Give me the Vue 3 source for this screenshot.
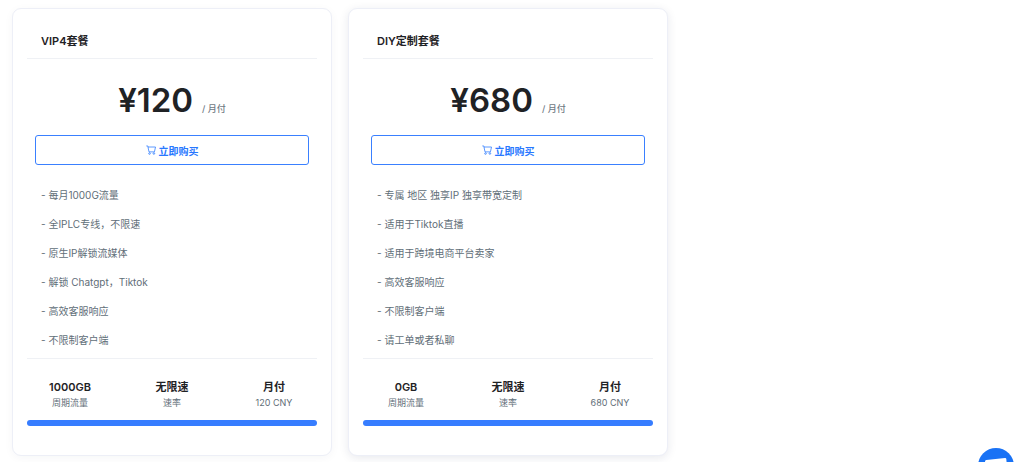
<script setup>
const plans = [
  {
    name: 'VIP4套餐',
    price: '¥120',
    features: ['每月1000G流量', '全IPLC专线，不限速', '原生IP解锁流媒体', '解锁 Chatgpt，Tiktok', '高效客服响应', '不限制客户端'],
    stats: [
      { value: '1000GB', label: '周期流量' },
      { value: '无限速', label: '速率' },
      { value: '月付', label: '120 CNY' },
    ],
    raised: false,
  },
  {
    name: 'DIY定制套餐',
    price: '¥680',
    features: ['专属 地区 独享IP 独享带宽定制', '适用于Tiktok直播', '适用于跨境电商平台卖家', '高效客服响应', '不限制客户端', '请工单或者私聊'],
    stats: [
      { value: '0GB', label: '周期流量' },
      { value: '无限速', label: '速率' },
      { value: '月付', label: '680 CNY' },
    ],
    raised: true,
  },
]
</script>

<template>
  <main class="plans">
    <article v-for="plan in plans" :key="plan.name" class="card" :class="{ raised: plan.raised }">
      <h2 class="title">{{ plan.name }}</h2>
      <p class="price">
        <span class="amount">{{ plan.price }}</span>
        <span class="period">/ 月付</span>
      </p>
      <button type="button" class="buy">
        <svg class="cart" viewBox="0 0 16 16" aria-hidden="true">
          <path d="M0.5 1.5H2.8L4.8 11H13.5L15.2 3.2H3.2" />
          <circle cx="5.6" cy="13.6" r="1.3" />
          <circle cx="12.6" cy="13.6" r="1.3" />
        </svg>
        <span>立即购买</span>
      </button>
      <ul class="features">
        <li v-for="feature in plan.features" :key="feature">- {{ feature }}</li>
      </ul>
      <dl class="stats">
        <div v-for="stat in plan.stats" :key="stat.label" class="stat">
          <dt>{{ stat.value }}</dt>
          <dd>{{ stat.label }}</dd>
        </div>
      </dl>
      <div class="bar"></div>
    </article>
    <button type="button" class="chat" aria-label="Chat">
      <svg viewBox="0 0 36 36" aria-hidden="true">
        <path d="M7 13.2Q7 12 8.2 11.9L27 10Q28.2 9.9 28.3 11L29.5 24L8 26Z" />
      </svg>
    </button>
  </main>
</template>

<style>
body {
  margin: 0;
  background: #fff;
  overflow: hidden;
}
</style>

<style scoped>
.plans {
  display: grid;
  grid-template-columns: repeat(3, 1fr);
  gap: 16px;
  padding: 8px 20px 6px 12px;
  font-family: Inter, "Noto Sans CJK SC", sans-serif;
  color: #1f2225;
}

.card {
  box-sizing: border-box;
  padding: 14px 14px 29px;
  border: 1px solid #edeff7;
  border-radius: 9px;
  background: #fff;
  box-shadow: 0 2px 10px rgba(30, 40, 80, 0.04);
}

.raised {
  box-shadow: 0 2px 10px rgba(30, 40, 80, 0.1);
}

.title {
  margin: 0;
  padding: 9px 14px 7px;
  border-bottom: 1px solid #eff1f5;
  font-size: 11px;
  line-height: 19px;
  font-weight: 600;
}

.price {
  display: flex;
  align-items: baseline;
  justify-content: center;
  gap: 9px;
  margin: 20px 0 5px;
  line-height: 42px;
}

.amount {
  font-size: 33px;
  font-weight: 600;
}

.period {
  font-size: 9px;
  font-weight: 500;
  color: #6f7a84;
}

.buy {
  display: flex;
  align-items: center;
  justify-content: center;
  gap: 3px;
  width: calc(100% - 16px);
  height: 30px;
  margin: 0 8px;
  padding: 0;
  border: 1px solid #3a80ff;
  border-radius: 3px;
  background: #fff;
  color: #2878ff;
  font-family: inherit;
  font-size: 10px;
  font-weight: 600;
}

.cart {
  width: 10px;
  height: 10px;
  fill: none;
  stroke: currentColor;
  stroke-width: 1.2;
}

.features {
  margin: 16px 0 0;
  padding: 0 14px 3px;
  border-bottom: 1px solid #eff1f5;
  list-style: none;
  font-size: 10px;
  line-height: 29px;
  font-weight: 400;
  color: #5f6e78;
}

.stats {
  display: flex;
  justify-content: space-between;
  margin: 20px 0 9px;
}

.stat {
  width: 86px;
  text-align: center;
}

.stat dt {
  font-size: 11px;
  line-height: 16px;
  font-weight: 600;
}

.stat dd {
  margin: 0;
  font-size: 9px;
  line-height: 16px;
  color: #5f6e78;
}

.bar {
  height: 6px;
  border-radius: 3px;
  background: #377dff;
}

.chat {
  position: fixed;
  right: 10px;
  bottom: -22px;
  width: 36px;
  height: 36px;
  padding: 0;
  border: 0;
  border-radius: 50%;
  background: #1972f5;
}

.chat svg {
  display: block;
  width: 36px;
  height: 36px;
  fill: #fff;
}
</style>
